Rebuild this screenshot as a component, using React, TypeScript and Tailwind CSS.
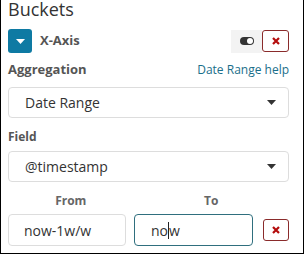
import { useState } from 'react';

function Caret({ className = '' }: { className?: string }) {
  return (
    <svg width="9" height="5" viewBox="0 0 9 5" className={className}>
      <path d="M0 0h9L4.5 5z" fill="currentColor" />
    </svg>
  );
}

function CloseButton({ small = false }: { small?: boolean }) {
  return (
    <button
      className={`flex items-center justify-center rounded-[3px] border border-[#8a2b2b] bg-white text-[#b40d0d] ${
        small ? 'w-[26px] h-[22px]' : 'w-[27px] h-[22px]'
      }`}
    >
      <svg width="8" height="8" viewBox="0 0 8 8">
        <path d="M1 1l6 6M7 1L1 7" stroke="currentColor" strokeWidth="2.2" />
      </svg>
    </button>
  );
}

export default function App() {
  const [from, setFrom] = useState('now-1w/w');

  return (
    <div
      className="w-[304px] h-[254px] bg-white border-l border-r border-b border-black overflow-hidden text-[#444]"
      style={{ fontFamily: '"Open Sans", "Noto Sans", sans-serif' }}
    >
      <div className="pl-[7px] pr-[14px]">
        <div className="text-[18px] leading-[22px] text-[#333] -mt-[2px]">Buckets</div>

        <div className="flex items-center mt-[9px] h-[24px]">
          <button className="w-[24px] h-[24px] rounded-[3px] bg-[#0e7aa3] text-white flex items-center justify-center">
            <Caret />
          </button>
          <span className="ml-[8px] text-[13px] font-bold text-[#555]">X-Axis</span>
          <div className="ml-auto flex items-center">
            <div className="w-[31px] h-[23px] bg-[#f3f3f3] flex items-center justify-center">
              <svg width="14" height="8" viewBox="0 0 14 8">
                <rect x="0" y="0" width="14" height="8" rx="4" fill="#333" />
                <circle cx="10" cy="4" r="3" fill="#fff" />
              </svg>
            </div>
            <CloseButton />
          </div>
        </div>

        <div className="flex items-center justify-between mt-[7px] h-[20px]">
          <span className="text-[13px] font-bold text-[#555]">Aggregation</span>
          <a className="text-[12px] text-[#1a6f8a]">Date Range help</a>
        </div>

        <div className="mt-[7px] h-[31px] rounded-[4px] border border-[#ddd] flex items-center pl-[16px] pr-[12px] text-[14px] text-[#333]">
          <span>Date Range</span>
          <Caret className="ml-auto text-[#333]" />
        </div>

        <div className="mt-[9px] h-[20px] flex items-center text-[12px] font-bold text-[#555]">Field</div>

        <div className="mt-[4px] h-[31px] rounded-[4px] border border-[#ddd] flex items-center pl-[16px] pr-[12px] text-[14px] text-[#333]">
          <span>@timestamp</span>
          <Caret className="ml-auto text-[#333]" />
        </div>

        <div className="flex mt-[9px] h-[20px] items-center text-[12px] font-bold text-[#666]">
          <div className="w-[126px] text-center">From</div>
          <div className="w-[156px] text-center">To</div>
        </div>

        <div className="flex items-center mt-[3px]">
          <input
            value={from}
            onChange={(e) => setFrom(e.target.value)}
            className="w-[118px] h-[32px] rounded-[4px] border border-[#ddd] pl-[15px] text-[14px] text-[#333] outline-none"
          />
          <div className="ml-[8px] w-[119px] h-[32px] rounded-[4px] border border-[#2f6f7e] pl-[16px] flex items-center text-[14px] text-[#333]">
            <span>no</span>
            <span className="w-px h-[17px] bg-[#222]" />
            <span>w</span>
          </div>
          <div className="ml-auto">
            <CloseButton small />
          </div>
        </div>
      </div>
    </div>
  );
}
